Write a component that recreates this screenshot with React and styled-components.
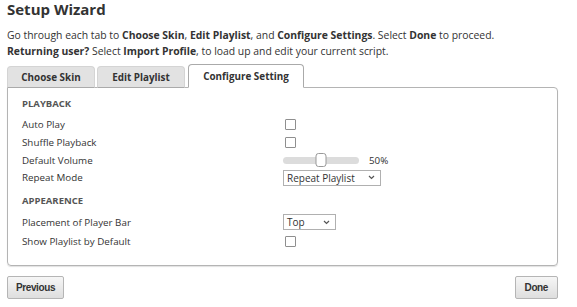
import React from 'react';
import styled, { createGlobalStyle } from 'styled-components';

const GlobalStyle = createGlobalStyle`
  html, body {
    margin: 0;
    padding: 0;
    background: #fff;
  }
  body {
    font-family: "Open Sans", "Noto Sans", sans-serif;
    color: #333;
    overflow: hidden;
  }
`;

const Page = styled.div`
  width: 551px;
  padding: 0 7px;
`;

const Title = styled.h1`
  margin: 0;
  font-size: 15px;
  line-height: 19px;
  font-weight: 700;
  color: #333;
`;

const Intro = styled.p`
  margin: 8px 0 0;
  font-size: 10.4px;
  line-height: 16px;
  color: #333;
  b {
    font-weight: 700;
  }
`;

const TabBar = styled.div`
  display: flex;
  gap: 2px;
  margin-top: 5px;
  height: 24px;
  align-items: flex-end;
  position: relative;
  z-index: 1;
  margin-bottom: -1px;
`;

const Tab = styled.div`
  width: ${p => p.$w}px;
  height: ${p => (p.$active ? 24 : 22)}px;
  box-sizing: border-box;
  display: flex;
  align-items: center;
  justify-content: center;
  font-size: 9.9px;
  font-weight: 700;
  color: #333;
  border: 1px solid ${p => (p.$active ? '#aaa' : '#d4d4d4')};
  border-bottom: ${p => (p.$active ? '1px solid #fff' : '1px solid #aaa')};
  border-radius: 4px 4px 0 0;
  background: ${p => (p.$active ? '#fff' : '#e2e2e2')};
  margin-left: ${p => p.$ml || 0}px;
`;

const Panel = styled.div`
  box-sizing: border-box;
  width: 551px;
  height: 179px;
  border: 1px solid #b4b4b4;
  border-radius: 0 4px 4px 4px;
  box-shadow: 0 1px 1px rgba(0, 0, 0, 0.12);
  padding: 9px 14px 0;
`;

const SectionTitle = styled.div`
  font-size: 9.5px;
  font-weight: 700;
  line-height: 14px;
  color: #555;
  margin-top: ${p => p.$mt || 0}px;
  margin-bottom: ${p => p.$mb || 5}px;
`;

const Row = styled.div`
  display: grid;
  grid-template-columns: 261px 1fr;
  align-items: center;
  height: ${p => p.$h || 17.7}px;
  font-size: 9.8px;
  color: #333;
`;

const Control = styled.div`
  display: flex;
  align-items: center;
  gap: 10px;
`;

const Checkbox = styled.span`
  display: block;
  width: 11px;
  height: 11px;
  box-sizing: border-box;
  margin-left: 2px;
  border: 1px solid #8f8f8f;
  border-radius: 1px;
  background: #fff;
`;

const Slider = styled.div`
  position: relative;
  width: 76px;
  height: 7px;
  border-radius: 4px;
  background: #dcdcdc;
`;

const Thumb = styled.span`
  position: absolute;
  top: -4px;
  left: ${p => p.$pos}%;
  transform: translateX(-50%);
  width: 11px;
  height: 14px;
  box-sizing: border-box;
  border: 1px solid #999;
  border-radius: 3px;
  background: #fff;
`;

const Value = styled.span`
  font-size: 9.8px;
`;

const Select = styled.div`
  width: ${p => p.$w}px;
  height: 16px;
  box-sizing: border-box;
  display: flex;
  align-items: center;
  justify-content: space-between;
  padding: 0 5px 0 3px;
  border: 1px solid #b0b0b0;
  background: #fff;
  font-size: 10px;
  color: #333;
`;

const Footer = styled.div`
  display: flex;
  justify-content: space-between;
  margin-top: 10px;
`;

const Button = styled.button`
  height: 23px;
  padding: 0 ${p => p.$px || 8}px;
  box-sizing: border-box;
  border: 1px solid #b5b5b5;
  border-radius: 2px;
  background: linear-gradient(#f6f6f6, #dedede);
  font-family: "Liberation Sans", Arial, sans-serif;
  font-size: 10px;
  font-weight: 700;
  letter-spacing: -0.4px;
  color: #333;
`;

const Chevron = () => (
  <svg width="7" height="5" viewBox="0 0 7 5">
    <path d="M1 1l2.5 2.5L6 1" fill="none" stroke="#555" strokeWidth="1.2" />
  </svg>
);

const App = () => {
  return (
    <Page>
      <GlobalStyle />
      <Title>Setup Wizard</Title>
      <Intro>
        Go through each tab to <b>Choose Skin</b>, <b>Edit Playlist</b>, and <b>Configure Settings</b>. Select <b>Done</b> to proceed.
        <br />
        <b>Returning user?</b> Select <b>Import Profile</b>, to load up and edit your current script.
      </Intro>
      <TabBar>
        <Tab $w={88}>Choose Skin</Tab>
        <Tab $w={88}>Edit Playlist</Tab>
        <Tab $w={116} $active $ml={1}>Configure Setting</Tab>
      </TabBar>
      <Panel>
        <SectionTitle $mb={5}>PLAYBACK</SectionTitle>
        <Row>
          <span>Auto Play</span>
          <Control><Checkbox /></Control>
        </Row>
        <Row>
          <span>Shuffle Playback</span>
          <Control><Checkbox /></Control>
        </Row>
        <Row>
          <span>Default Volume</span>
          <Control>
            <Slider><Thumb $pos={50} /></Slider>
            <Value>50%</Value>
          </Control>
        </Row>
        <Row>
          <span>Repeat Mode</span>
          <Control>
            <Select $w={98}>Repeat Playlist<Chevron /></Select>
          </Control>
        </Row>
        <SectionTitle $mt={7}>APPEARENCE</SectionTitle>
        <Row $h={19}>
          <span>Placement of Player Bar</span>
          <Control>
            <Select $w={53}>Top<Chevron /></Select>
          </Control>
        </Row>
        <Row $h={19}>
          <span>Show Playlist by Default</span>
          <Control><Checkbox /></Control>
        </Row>
      </Panel>
      <Footer>
        <Button>Previous</Button>
        <Button $px={9}>Done</Button>
      </Footer>
    </Page>
  );
};

export default App;
